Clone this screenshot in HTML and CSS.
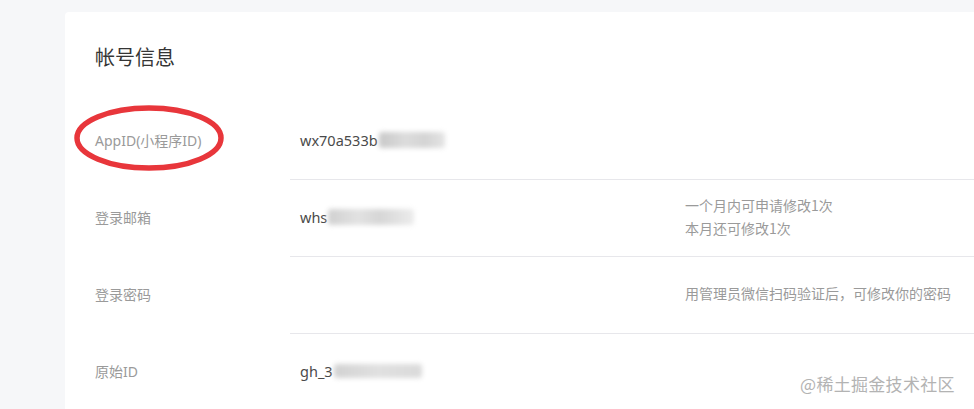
FILE: index.html
```html
<!DOCTYPE html>
<html lang="zh-CN">
<head>
<meta charset="utf-8">
<title>帐号信息</title>
<link rel="stylesheet" href="styles.css">
</head>
<body>
<div class="page">
  <section class="card">
    <h2 class="title">帐号信息</h2>
    <div class="rows">
      <div class="row">
        <div class="label">AppID(小程序ID)</div>
        <div class="cell">
          <div class="value">wx70a533b<span class="mask m1"></span></div>
          <div class="note"></div>
        </div>
      </div>
      <div class="row">
        <div class="label">登录邮箱</div>
        <div class="cell">
          <div class="value">whs<span class="mask m2"></span></div>
          <div class="note">一个月内可申请修改1次<br>本月还可修改1次</div>
        </div>
      </div>
      <div class="row">
        <div class="label">登录密码</div>
        <div class="cell">
          <div class="value"></div>
          <div class="note">用管理员微信扫码验证后，可修改你的密码</div>
        </div>
      </div>
      <div class="row">
        <div class="label">原始ID</div>
        <div class="cell last">
          <div class="value">gh_3<span class="mask m3"></span></div>
          <div class="note"></div>
        </div>
      </div>
    </div>
    <svg class="circle" width="156" height="72" viewBox="0 0 156 72" aria-hidden="true">
      <ellipse cx="78" cy="36" rx="72" ry="30" fill="none" stroke="#e8363b" stroke-width="5.5"/>
    </svg>
  </section>
  <div class="watermark">@稀土掘金技术社区</div>
</div>
</body>
</html>
```

FILE: styles.css
```css
html, body {
  margin: 0;
  padding: 0;
  background: #f6f7f9;
  overflow: hidden;
}
body {
  width: 974px;
  height: 409px;
  font-family: "Noto Sans", "Noto Sans CJK SC", sans-serif;
}
.page {
  position: relative;
  height: 409px;
  box-sizing: border-box;
  padding: 12px 0 0 65px;
}
.card {
  position: relative;
  width: 909px;
  height: 397px;
  overflow: hidden;
  background: #fff;
  border-radius: 4px 0 0 0;
  padding: 30px 0 0 30px;
  box-sizing: border-box;
}
.title {
  margin: 0 0 31px;
  font-size: 20px;
  font-weight: 400;
  line-height: 30px;
  color: #353535;
  font-family: "Noto Sans CJK SC", sans-serif;
}
.row {
  display: grid;
  grid-template-columns: 195px 1fr;
  height: 77px;
}
.label {
  display: flex;
  align-items: center;
  padding-bottom: 3px;
  font-size: 14px;
  color: #9a9a9a;
}
.cell {
  display: flex;
  align-items: center;
  padding-bottom: 3px;
  border-bottom: 1px solid #e7e7eb;
}
.cell.last {
  border-bottom: none;
}
.value {
  width: 385px;
  padding-left: 10px;
  font-size: 14.5px;
  color: #4a4a4a;
  display: flex;
  align-items: center;
}
.note {
  font-size: 14px;
  line-height: 23px;
  color: #9a9a9a;
  font-family: "Noto Sans CJK SC", sans-serif;
}
.mask {
  display: inline-block;
  height: 16px;
  background: #d8d8d8;
  filter: blur(2.5px);
  border-radius: 3px;
}
.m1 { width: 66px; margin-left: 1px; background: linear-gradient(90deg, #c8c8c8, #dcdcdc 40%, #d4d4d4 70%, #e4e4e4); }
.m2 { width: 86px; margin-left: 1px; background: linear-gradient(90deg, #d0d0d0, #e2e2e2 35%, #d6d6d6 60%, #ececec); }
.m3 { width: 88px; margin-left: 1px; background: linear-gradient(90deg, #d2d2d2, #e0e0e0 50%, #dadada); height: 14px; }
.circle {
  position: absolute;
  left: 6px;
  top: 90px;
}
.watermark {
  position: absolute;
  left: 800px;
  top: 372px;
  font-size: 17px;
  line-height: 24px;
  color: #b3b3b3;
  font-family: "Noto Sans CJK SC", sans-serif;
  letter-spacing: 0.3px;
}
```
